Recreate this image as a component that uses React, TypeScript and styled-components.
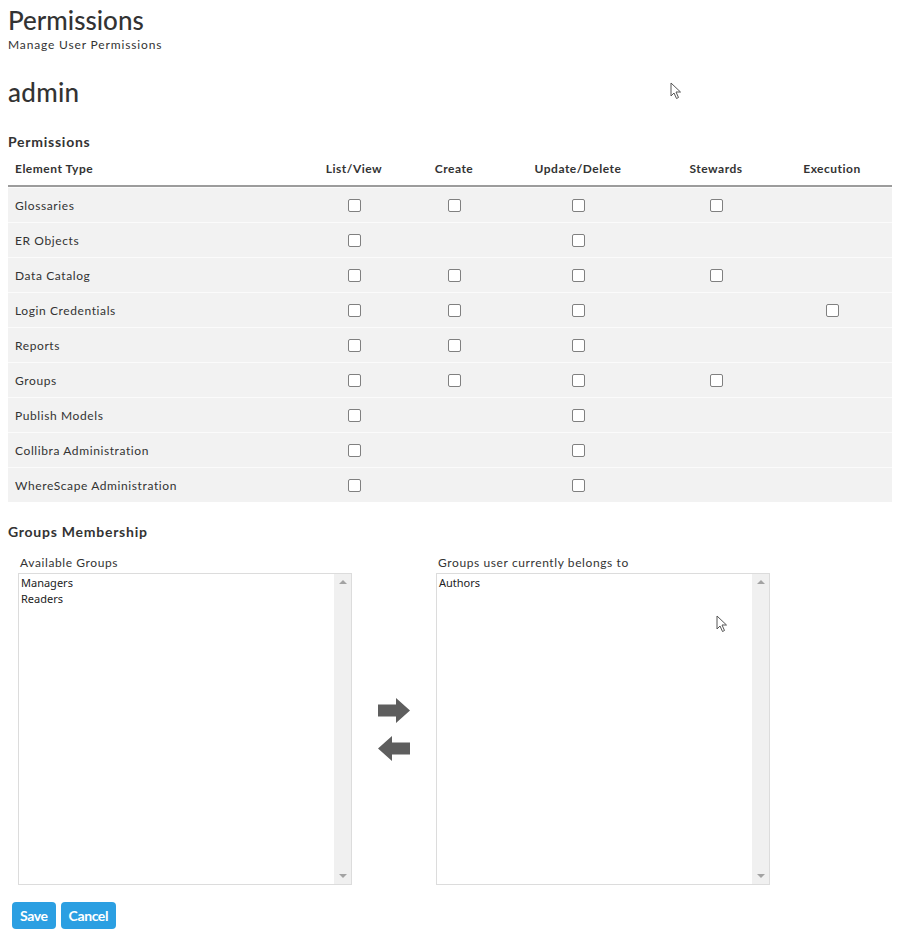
import React from 'react';
import styled, { createGlobalStyle } from 'styled-components';

type PermRow = {
  name: string;
  cells: boolean[];
};

const rows: PermRow[] = [
  { name: 'Glossaries', cells: [true, true, true, true, false] },
  { name: 'ER Objects', cells: [true, false, true, false, false] },
  { name: 'Data Catalog', cells: [true, true, true, true, false] },
  { name: 'Login Credentials', cells: [true, true, true, false, true] },
  { name: 'Reports', cells: [true, true, true, false, false] },
  { name: 'Groups', cells: [true, true, true, true, false] },
  { name: 'Publish Models', cells: [true, false, true, false, false] },
  { name: 'Collibra Administration', cells: [true, false, true, false, false] },
  { name: 'WhereScape Administration', cells: [true, false, true, false, false] },
];

const columns = ['List/View', 'Create', 'Update/Delete', 'Stewards', 'Execution'];

const GlobalStyle = createGlobalStyle`
  body {
    margin: 0;
    background: #fff;
    color: #333;
    font-family: Lato, "Open Sans", sans-serif;
  }
`;

const Cursor: React.FC<{ x: number; y: number }> = ({ x, y }) => (
  <CursorWrap style={{ left: x, top: y }}>
    <svg width="12" height="18" viewBox="0 0 12 18">
      <path
        d="M1 1 L1 14 L4 11 L6.5 16.5 L8.5 15.5 L6 10 L10.5 10 Z"
        fill="#fff"
        stroke="#555"
        strokeWidth="1"
        strokeLinejoin="round"
      />
    </svg>
  </CursorWrap>
);

const ListBox: React.FC<{ items: string[] }> = ({ items }) => (
  <Box>
    <BoxItems>
      {items.map((i) => (
        <BoxItem key={i}>{i}</BoxItem>
      ))}
    </BoxItems>
    <Track>
      <TriUp />
      <TriDown />
    </Track>
  </Box>
);

const App: React.FC = () => {
  return (
    <Page>
      <GlobalStyle />
      <Title>Permissions</Title>
      <Subtitle>Manage User Permissions</Subtitle>
      <UserName>admin</UserName>
      <SectionTitle>Permissions</SectionTitle>
      <Table>
        <HeadRow>
          <HeadCell $left>Element Type</HeadCell>
          {columns.map((c) => (
            <HeadCell key={c}>{c}</HeadCell>
          ))}
        </HeadRow>
        {rows.map((r) => (
          <BodyRow key={r.name}>
            <NameCell>{r.name}</NameCell>
            {r.cells.map((on, i) => (
              <CheckCell key={i}>{on && <Check />}</CheckCell>
            ))}
          </BodyRow>
        ))}
      </Table>

      <SectionTitle $top={20}>Groups Membership</SectionTitle>
      <Groups>
        <GroupCol>
          <GroupLabel>Available Groups</GroupLabel>
          <ListBox items={['Managers', 'Readers']} />
        </GroupCol>
        <Arrows>
          <svg width="34" height="27" viewBox="0 0 34 27">
            <path d="M1 7.5 H19 V1 L33 13.5 L19 26 V19.5 H1 Z" fill="#5e5e5e" />
          </svg>
          <svg width="34" height="27" viewBox="0 0 34 27">
            <path d="M33 7.5 H15 V1 L1 13.5 L15 26 V19.5 H33 Z" fill="#5e5e5e" />
          </svg>
        </Arrows>
        <GroupCol>
          <GroupLabel>Groups user currently belongs to</GroupLabel>
          <ListBox items={['Authors']} />
        </GroupCol>
      </Groups>

      <Buttons>
        <Button>Save</Button>
        <Button>Cancel</Button>
      </Buttons>

      <Cursor x={670} y={82} />
      <Cursor x={716} y={615} />
    </Page>
  );
};

export default App;

const Page = styled.div`
  position: relative;
  padding: 5px 8px 0 8px;
  width: 884px;
  height: 926px;
`;

const Title = styled.h1`
  margin: 0;
  font-size: 26px;
  line-height: 30px;
  font-weight: 500;
  color: #333;
`;

const Subtitle = styled.div`
  margin-top: 2px;
  font-size: 12px;
  line-height: 16px;
  letter-spacing: 0.85px;
  color: #333;
`;

const UserName = styled.h2`
  margin: 24px 0 0 0;
  font-size: 26px;
  line-height: 30px;
  font-weight: 500;
  letter-spacing: 0.3px;
`;

const SectionTitle = styled.h3<{ $top?: number }>`
  margin: ${(p) => p.$top ?? 25}px 0 0 0;
  font-size: 14px;
  line-height: 20px;
  font-weight: 700;
  letter-spacing: 0.75px;
  color: #333;
`;

const Table = styled.div`
  display: flex;
  flex-direction: column;
  width: 884px;
`;

const gridCols = '296px 100px 100px 148px 128px 104px';

const HeadRow = styled.div`
  display: grid;
  grid-template-columns: ${gridCols};
  height: 33px;
  align-items: center;
  border-bottom: 2px solid #9c9c9c;
`;

const HeadCell = styled.div<{ $left?: boolean }>`
  font-size: 12px;
  font-weight: 700;
  letter-spacing: 0.5px;
  color: #333;
  text-align: ${(p) => (p.$left ? 'left' : 'center')};
  padding-left: ${(p) => (p.$left ? '7px' : '0')};
`;

const BodyRow = styled.div`
  display: grid;
  grid-template-columns: ${gridCols};
  height: 34px;
  align-items: center;
  background: #f2f2f2;
  border-top: 1px solid #fbfbfb;
  &:first-of-type {
    border-top: none;
  }
`;

const NameCell = styled.div`
  padding-left: 7px;
  font-size: 12px;
  letter-spacing: 0.6px;
  color: #333;
`;

const CheckCell = styled.div`
  display: flex;
  justify-content: center;
  align-items: center;
`;

const Check = styled.span`
  display: block;
  width: 11px;
  height: 11px;
  border: 1px solid #808080;
  border-radius: 2px;
  background: #fff;
`;

const Groups = styled.div`
  display: flex;
  align-items: flex-start;
  margin-top: 13px;
  padding-left: 10px;
`;

const GroupCol = styled.div`
  display: flex;
  flex-direction: column;
`;

const GroupLabel = styled.div`
  font-size: 12px;
  line-height: 16px;
  letter-spacing: 0.6px;
  color: #333;
  padding-left: 2px;
  margin-bottom: 2px;
`;

const Box = styled.div`
  display: flex;
  width: 332px;
  height: 310px;
  border: 1px solid #dcdcdc;
  background: #fff;
`;

const BoxItems = styled.div`
  flex: 1;
  padding: 1px 2px;
`;

const BoxItem = styled.div`
  font-family: 'Noto Sans', sans-serif;
  font-size: 11px;
  line-height: 16px;
  color: #222;
`;

const Track = styled.div`
  width: 17px;
  background: #f0f0f0;
  display: flex;
  flex-direction: column;
  justify-content: space-between;
  align-items: center;
  padding: 6px 0;
`;

const TriUp = styled.span`
  width: 0;
  height: 0;
  border-left: 4px solid transparent;
  border-right: 4px solid transparent;
  border-bottom: 4px solid #a3a3a3;
`;

const TriDown = styled.span`
  width: 0;
  height: 0;
  border-left: 4px solid transparent;
  border-right: 4px solid transparent;
  border-top: 4px solid #a3a3a3;
`;

const Arrows = styled.div`
  display: flex;
  flex-direction: column;
  gap: 11px;
  align-self: center;
  margin: 18px 25px 0 25px;
`;

const Buttons = styled.div`
  display: flex;
  gap: 5px;
  margin-top: 17px;
  padding-left: 4px;
`;

const Button = styled.button`
  height: 27px;
  padding: 0 8px;
  border: none;
  border-radius: 4px;
  background: #2b9fe2;
  color: #fff;
  font-family: Lato, sans-serif;
  font-weight: 700;
  font-size: 14px;
  letter-spacing: -0.4px;
`;

const CursorWrap = styled.div`
  position: absolute;
  width: 12px;
  height: 18px;
`;
